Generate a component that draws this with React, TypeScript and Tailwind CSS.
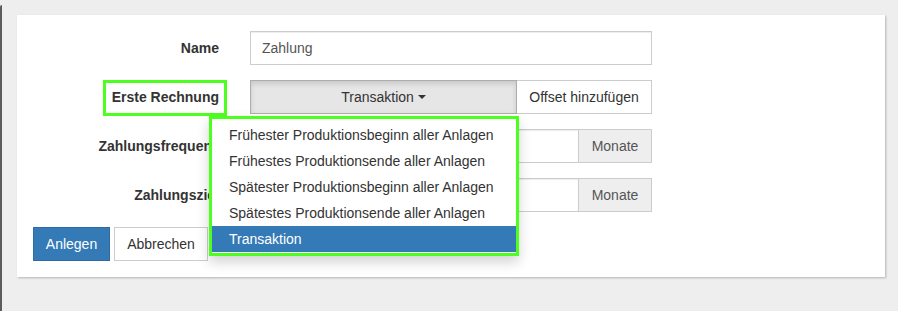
import React from "react";

const options = [
  "Frühester Produktionsbeginn aller Anlagen",
  "Frühestes Produktionsende aller Anlagen",
  "Spätester Produktionsbeginn aller Anlagen",
  "Spätestes Produktionsende aller Anlagen",
  "Transaktion",
];

const Label: React.FC<{ children: React.ReactNode }> = ({ children }) => (
  <div className="w-[186px] shrink-0 text-right font-bold text-[#333] whitespace-nowrap">{children}</div>
);

const MonthInput: React.FC = () => (
  <div className="ml-[31px] w-[402px] h-[34px] flex">
    <div className="flex-1 border border-[#ccc] bg-white shadow-[inset_0_1px_1px_rgba(0,0,0,0.075)]" />
    <div className="w-[73px] flex items-center justify-center border border-l-0 border-[#ccc] bg-[#eeeeee] text-[#555]">
      Monate
    </div>
  </div>
);

const App: React.FC = () => {
  return (
    <div className="relative w-[898px] h-[311px] overflow-hidden bg-[#eeeeee] pt-[15px] pl-[17px] font-['Liberation_Sans',Arial,sans-serif] text-[14px] text-[#333]">
      <div className="absolute left-0 top-[5px] bottom-0 w-[2px] rounded-tl-[4px] bg-[#5c5c5c]" />
      <div className="w-[868px] h-[262px] bg-white p-[16px] shadow-[1px_1px_2px_rgba(0,0,0,0.25)]">
        {/* Name */}
        <div className="flex items-center h-[34px] mb-[15px]">
          <Label>Name</Label>
          <div className="ml-[31px] w-[402px] h-[34px] flex items-center px-[11px] border border-[#ccc] text-[#555] shadow-[inset_0_1px_1px_rgba(0,0,0,0.075)]">
            Zahlung
          </div>
        </div>

        {/* Erste Rechnung */}
        <div className="flex items-center h-[34px] mb-[15px]">
          <Label>
            <span className="relative">
              Erste Rechnung
              <span className="absolute -left-[9px] -right-[8px] -top-[9px] -bottom-[11px] border-[3px] border-[#4dff1f]" />
            </span>
          </Label>
          <div className="relative ml-[31px] w-[402px] h-[34px] flex">
            <div className="flex-1 flex items-center justify-center border border-[#adadad] bg-[#e6e6e6] shadow-[inset_0_3px_5px_rgba(0,0,0,0.125)]">
              Transaktion
              <span className="inline-block w-0 h-0 ml-[4px] border-t-[4px] border-x-[4px] border-x-transparent border-t-[#333]" />
            </div>
            <div className="w-[135px] flex items-center justify-center border border-l-0 border-[#ccc] bg-white">
              Offset hinzufügen
            </div>
            <div className="absolute z-10 left-[-41px] top-[36px] w-[310px] border-[3px] border-[#4dff1f] bg-white pt-[3px] pb-[1px] shadow-[0_6px_12px_rgba(0,0,0,0.175)]">
              {options.map((o, i) => (
                <div
                  key={i}
                  className={
                    i === options.length - 1
                      ? "h-[26px] leading-[26px] pl-[17px] bg-[#337ab7] text-white whitespace-nowrap"
                      : "h-[26px] leading-[26px] pl-[17px] text-[#333] whitespace-nowrap"
                  }
                >
                  {o}
                </div>
              ))}
            </div>
          </div>
        </div>

        {/* Zahlungsfrequenz */}
        <div className="flex items-center h-[34px] mb-[15px]">
          <Label>Zahlungsfrequenz</Label>
          <MonthInput />
        </div>

        {/* Zahlungsziel */}
        <div className="flex items-center h-[34px] mb-[15px]">
          <Label>Zahlungsziel</Label>
          <MonthInput />
        </div>

        <div className="flex gap-[4px]">
          <button className="w-[77px] h-[34px] bg-[#337ab7] border border-[#2e6da4] text-white">Anlegen</button>
          <button className="w-[94px] h-[34px] bg-white border border-[#ccc] text-[#333]">Abbrechen</button>
        </div>
      </div>
    </div>
  );
};

export default App;
